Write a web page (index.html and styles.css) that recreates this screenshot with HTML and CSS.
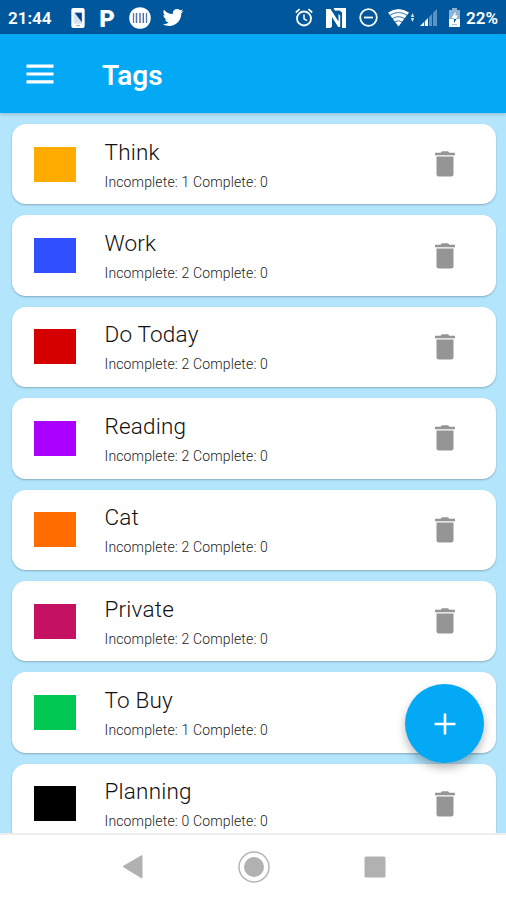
FILE: index.html
```html
<!DOCTYPE html>
<html lang="en">
<head>
    <meta charset="UTF-8">
    <meta name="viewport" content="width=device-width, initial-scale=1.0">
    <title>Tags</title>
    <link rel="stylesheet" href="styles.css">
</head>
<body>

    <!-- Shared icons -->
    <svg class="sprite" width="0" height="0">
        <symbol id="trash" viewBox="0 0 20 26">
            <path d="M0 1.800h5.500L7 .3h6l1.500 1.500H20v2.400H0z"/>
            <path d="M1.500 5.500h17v17.700q0 2.300-2.300 2.300H3.800q-2.300 0-2.300-2.300z"/>
        </symbol>
    </svg>

    <div class="phone">
        <!-- Status bar -->
        <div class="status-bar">
            <span class="clock">21:44</span>
            <div class="status-left">
                <svg width="14" height="20" viewBox="0 0 14 21">
                    <rect width="14" height="21" rx="2" fill="#fff"/>
                    <path d="M2.500 4.500h9v12h-9z" fill="#d5e0f0"/>
                    <path d="M3.500 5h7.500v10z" fill="#01428a"/>
                    <path d="M5 18.500h4" stroke="#7e9cc6"/>
                </svg>
                <span class="p-logo">P</span>
                <svg width="22" height="22" viewBox="0 0 22 22">
                    <circle cx="11" cy="11" r="10.800" fill="#fff"/>
                    <path d="M4.500 6v10M17.500 6v10" stroke="#4c78b0" stroke-width="1.300"/>
                    <path d="M7.500 6v10M11 6v10M14.300 6v10" stroke="#54719f" stroke-width="1.500"/>
                </svg>
                <svg width="21" height="21" viewBox="2 2 21 21" fill="#fff">
                    <path d="M22.460 6c-.77.35-1.600.58-2.460.69.88-.53 1.560-1.370 1.880-2.380-.83.5-1.750.85-2.720 1.050C18.370 4.500 17.260 4 16 4c-2.350 0-4.270 1.920-4.270 4.290 0 .34.04.67.11.98C8.280 9.090 5.110 7.380 3 4.790c-.37.63-.58 1.370-.58 2.150 0 1.490.75 2.810 1.910 3.560-.71 0-1.370-.2-1.950-.5v.03c0 2.080 1.480 3.820 3.440 4.210a4.220 4.220 0 0 1-1.930.07 4.280 4.280 0 0 0 4 2.980 8.521 8.521 0 0 1-5.330 1.840c-.34 0-.68-.02-1.020-.06C3.440 20.290 5.700 21 8.120 21 16 21 20.330 14.460 20.330 8.790c0-.19 0-.37-.01-.56.84-.6 1.560-1.360 2.140-2.230z"/>
                </svg>
            </div>
            <div class="status-right">
                <!-- alarm -->
                <svg width="18" height="19" viewBox="0 0 18 19" fill="none" stroke="#fff">
                    <circle cx="9" cy="10.500" r="7" stroke-width="1.800"/>
                    <path d="M.8 4.500 4.600 1.200M17.200 4.500l-3.800-3.300" stroke-width="1.700"/>
                    <path d="M9 6.500v4.300l3 1.900" stroke-width="1.500"/>
                </svg>
                <!-- nfc -->
                <svg width="20" height="20" viewBox="0 0 20 20" fill="#fff">
                    <path d="M0 1h4.500l8 12.500V6l1.700 1.500V19h-2L6 9v9.500L4.300 20H0z"/>
                    <path d="M7.500 0H20v20h-4V4.500L13.500 2.500l-4.500.2z"/>
                </svg>
                <!-- do not disturb -->
                <svg width="19" height="19" viewBox="0 0 19 19" fill="none" stroke="#fff" stroke-width="1.800">
                    <circle cx="9.500" cy="9.500" r="8.300"/>
                    <path d="M5 9.500h9"/>
                </svg>
                <!-- wifi -->
                <svg class="wifi" width="28" height="18" viewBox="0 0 28 18">
                    <path d="M0 3.500Q10.500-3.500 21 3.500L10.500 17.500z" fill="#fff"/>
                    <path d="M1.500 6.500q9-6 18 0M4 9.800q6.500-4.300 13 0M6.500 13q4-2.500 8 0" fill="none" stroke="#01579b" stroke-width=".8"/>
                    <path d="m22.800 8 1.700-4 1.700 4zM22.800 9l1.700 4 1.700-4z" fill="#d5e3f0"/>
                </svg>
                <!-- signal -->
                <svg class="signal" width="17" height="17" viewBox="0 0 17 17">
                    <path d="M0 17l4-4v4zM4.800 17v-4.800L8 9v8z" fill="#fff"/>
                    <path d="M9 17V8l3-3v12zM13 17V4l4-4v17z" fill="#5d91c2"/>
                </svg>
                <!-- battery -->
                <svg class="battery" width="11" height="19" viewBox="0 0 11 19">
                    <path d="M3 0h5v2h3v9H0V2h3z" fill="#8db2d5"/>
                    <path d="M0 11h11v8H0z" fill="#fff"/>
                    <path d="M6.500 3.500 2.500 10H5v4l4-6.500H6.500z" fill="#fff"/>
                    <path d="M5 11v4l2.500-4z" fill="#01579b"/>
                    <path d="M3 16.700h5" stroke="#7ba4cc" stroke-width=".8"/>
                </svg>
                <span>22%</span>
            </div>
        </div>

        <!-- App bar -->
        <header class="app-bar">
            <svg class="menu" width="28" height="20" viewBox="0 0 28 20" stroke="#fff" stroke-width="3.200">
                <path d="M.5 2.200h27M.5 10h27M.5 17.800h27"/>
            </svg>
            <h1>Tags</h1>
        </header>

        <!-- Tag list -->
        <main class="tag-list">
            <div class="tag-card">
                <div class="swatch orange"></div>
                <div class="tag-text">
                    <h2>Think</h2>
                    <p>Incomplete: 1 Complete: 0</p>
                </div>
                <svg class="trash"><use href="#trash"/></svg>
            </div>
            <div class="tag-card">
                <div class="swatch blue"></div>
                <div class="tag-text">
                    <h2>Work</h2>
                    <p>Incomplete: 2 Complete: 0</p>
                </div>
                <svg class="trash"><use href="#trash"/></svg>
            </div>
            <div class="tag-card">
                <div class="swatch red"></div>
                <div class="tag-text">
                    <h2>Do Today</h2>
                    <p>Incomplete: 2 Complete: 0</p>
                </div>
                <svg class="trash"><use href="#trash"/></svg>
            </div>
            <div class="tag-card">
                <div class="swatch purple"></div>
                <div class="tag-text">
                    <h2>Reading</h2>
                    <p>Incomplete: 2 Complete: 0</p>
                </div>
                <svg class="trash"><use href="#trash"/></svg>
            </div>
            <div class="tag-card">
                <div class="swatch dark-orange"></div>
                <div class="tag-text">
                    <h2>Cat</h2>
                    <p>Incomplete: 2 Complete: 0</p>
                </div>
                <svg class="trash"><use href="#trash"/></svg>
            </div>
            <div class="tag-card">
                <div class="swatch pink"></div>
                <div class="tag-text">
                    <h2>Private</h2>
                    <p>Incomplete: 2 Complete: 0</p>
                </div>
                <svg class="trash"><use href="#trash"/></svg>
            </div>
            <div class="tag-card">
                <div class="swatch green"></div>
                <div class="tag-text">
                    <h2>To Buy</h2>
                    <p>Incomplete: 1 Complete: 0</p>
                </div>
                <svg class="trash"><use href="#trash"/></svg>
            </div>
            <div class="tag-card">
                <div class="swatch black"></div>
                <div class="tag-text">
                    <h2>Planning</h2>
                    <p>Incomplete: 0 Complete: 0</p>
                </div>
                <svg class="trash"><use href="#trash"/></svg>
            </div>

            <button class="fab" aria-label="Add tag">
                <svg width="22" height="22" viewBox="0 0 22 22" stroke="#fff" stroke-width="2.600">
                    <path d="M11 .5v21M.5 11h21"/>
                </svg>
            </button>
        </main>

        <!-- Navigation bar -->
        <nav class="nav-bar">
            <svg width="32" height="32" viewBox="0 0 32 32" fill="#b1b1b1">
                <path d="M6 15.500 25 4.500v22.500z" stroke="#b1b1b1" stroke-linejoin="round"/>
            </svg>
            <svg width="32" height="32" viewBox="0 0 32 32">
                <circle cx="16" cy="16" r="15" fill="none" stroke="#b1b1b1" stroke-width="1.400"/>
                <circle cx="16" cy="16" r="10" fill="#b1b1b1"/>
            </svg>
            <svg width="32" height="32" viewBox="0 0 32 32" fill="#b1b1b1">
                <rect x="5.500" y="5.500" width="21" height="21" rx="1.500"/>
            </svg>
        </nav>
    </div>

</body>
</html>
```
FILE: styles.css
```css
body {
    font-family: Roboto, 'Liberation Sans', sans-serif;
    margin: 0;
    background-color: #fff;
    color: #111;
}

h1, h2, p {
    margin: 0;
}

.sprite {
    position: absolute;
}

.phone {
    display: flex;
    flex-direction: column;
    width: 506px;
    height: 900px;
    overflow: hidden;
}

/* Status bar */
.status-bar {
    display: flex;
    align-items: center;
    flex: none;
    height: 34px;
    padding: 1px 8px 0 8px;
    box-sizing: border-box;
    background-color: #01579b;
    color: #fff;
    font-size: 17px;
    font-weight: 600;
}

.clock {
    width: 63px;
}

.status-left,
.status-right {
    display: flex;
    align-items: center;
}

.status-left {
    gap: 12px;
}

.p-logo {
    width: 20px;
    text-align: center;
    font-size: 24px;
    font-weight: 900;
    line-height: 30px;
    padding-top: 2px;
}

.status-right {
    margin-left: auto;
    gap: 13px;
}

.wifi {
    margin-left: -3px;
}

.signal {
    margin-left: -9px;
}

.battery {
    margin: 0 -7px 0 -1px;
}

/* App bar */
.app-bar {
    display: flex;
    align-items: center;
    flex: none;
    height: 79px;
    padding-left: 26px;
    box-sizing: border-box;
    background-color: #03a9f4;
    color: #fff;
    z-index: 1;
    box-shadow: 0 1px 4px rgba(0, 0, 0, 0.2);
}

.app-bar h1 {
    margin: 4px 0 0 48px;
    font-size: 28px;
    font-weight: 600;
}

/* Tag list */
.tag-list {
    position: relative;
    display: flex;
    flex-direction: column;
    gap: 11px;
    flex: none;
    height: 720px;
    padding: 11px 10.500px 0 11.500px;
    box-sizing: border-box;
    overflow: hidden;
    background-color: #b3e5fc;
}

.tag-card {
    display: flex;
    align-items: center;
    flex: none;
    height: 80.4px;
    padding: 0 40.500px 0 22.500px;
    box-sizing: border-box;
    border-radius: 14px;
    background-color: #fff;
    box-shadow: 0 1px 2px rgba(0, 0, 0, 0.25);
}

.tag-text {
    flex: 1;
    margin-left: 28.500px;
}

.tag-text h2 {
    padding-top: 1px;
    font-size: 22.500px;
    font-weight: 300;
    letter-spacing: 0.2px;
    line-height: 28px;
}

.tag-text p {
    margin-top: 6px;
    font-size: 14px;
    font-weight: 300;
    letter-spacing: 0.15px;
    line-height: 20px;
    color: #222;
}

.trash {
    width: 20px;
    height: 26px;
    fill: #959595;
}

.swatch {
    width: 42px;
    height: 35px;
}

.orange { background-color: #ffab00; }
.blue { background-color: #304ffe; }
.red { background-color: #d50000; }
.purple { background-color: #aa00ff; }
.dark-orange { background-color: #ff6d00; }
.pink { background-color: #c51162; }
.green { background-color: #00c853; }
.black { background-color: #000; }

/* Floating add button */
.fab {
    position: absolute;
    right: 22px;
    bottom: 70px;
    display: flex;
    align-items: center;
    justify-content: center;
    width: 79px;
    height: 79px;
    padding: 0;
    border: none;
    border-radius: 50%;
    background-color: #03a9f4;
    box-shadow: 0 5px 10px rgba(0, 0, 0, 0.28);
}

/* Navigation bar */
.nav-bar {
    display: flex;
    align-items: center;
    justify-content: center;
    gap: 89px;
    flex: 1;
    padding: 0 0 2px 1px;
    border-top: 2px solid #eee;
    background-color: #fff;
}
```
